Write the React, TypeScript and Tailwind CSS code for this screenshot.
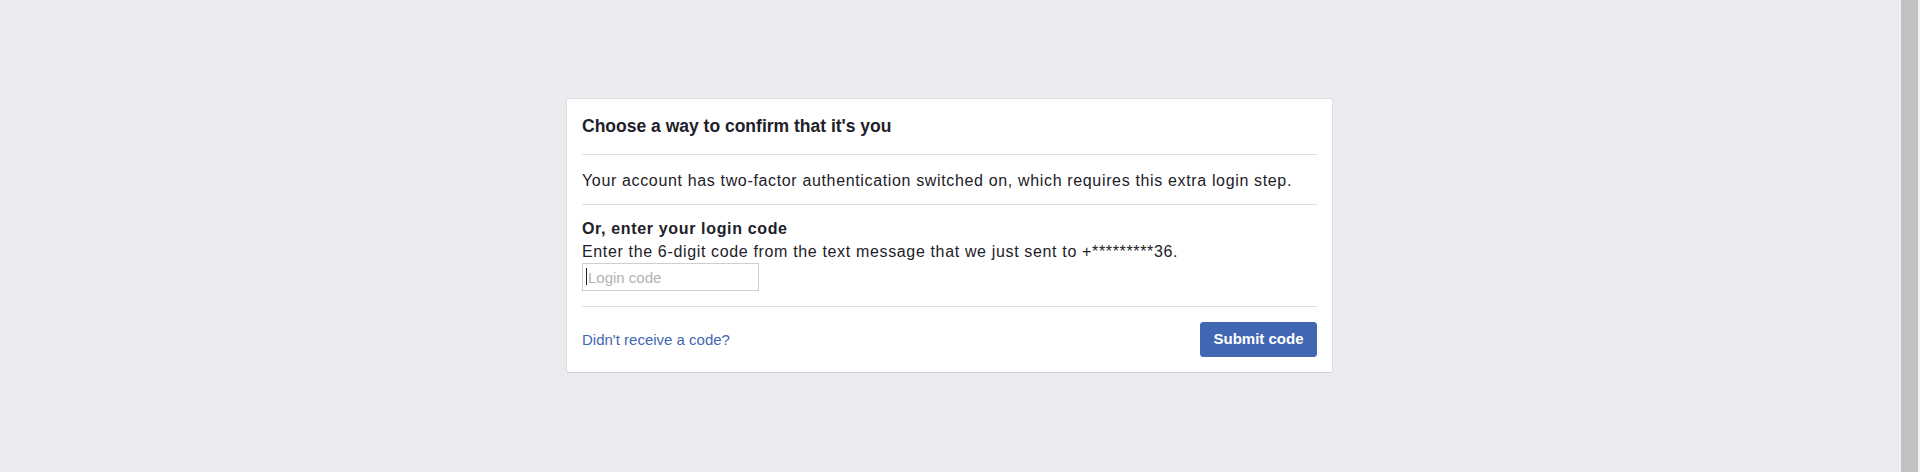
import React from "react";

export default function App() {
  return (
    <div className="flex h-[472px] w-full bg-[#e9ebee] font-['Liberation_Sans',Arial,sans-serif] text-[#1d2129]">
      <div className="flex flex-1 justify-center">
        <div className="mt-[98px] h-[275px] w-[767px] rounded-[3px] border border-[#dddfe2] border-b-[#ccd0d5] bg-white px-[15px]">
          <div className="border-b border-[#dadde1] pt-[16px] pb-[17px]">
            <h2 className="text-[17.5px] font-bold leading-[22px]">Choose a way to confirm that it's you</h2>
          </div>
          <div className="border-b border-[#dadde1] pt-[16px] pb-[13px]">
            <p className="text-[16px] leading-[20px] tracking-[0.65px]">
              Your account has two-factor authentication switched on, which requires this extra login step.
            </p>
          </div>
          <div className="border-b border-[#dadde1] pt-[13px] pb-[15px]">
            <div className="text-[16px] font-bold leading-[22px] tracking-[0.65px]">Or, enter your login code</div>
            <div className="text-[16px] leading-[23px] tracking-[0.65px]">
              Enter the 6-digit code from the text message that we just sent to +*********36.
            </div>
            <div className="relative h-[28px] w-[177px]">
              <input
                type="text"
                placeholder="Login code"
                className="h-full w-full border border-[#ccd0d5] bg-white pl-[5px] text-[15px] text-[#1d2129] outline-none placeholder:text-[#b0b3b8]"
              />
              <span className="pointer-events-none absolute left-[4px] top-[5px] h-[17px] w-px bg-[#1d2129]" />
            </div>
          </div>
          <div className="flex items-center justify-between pt-[15px]">
            <a href="#" className="text-[15px] leading-[19px] text-[#4267b2]">
              Didn't receive a code?
            </a>
            <button className="h-[35px] w-[117px] rounded-[3px] border border-[#4267b2] bg-[#4267b2] text-[15px] font-bold text-white">
              Submit code
            </button>
          </div>
        </div>
      </div>
      <div className="flex w-[21px] justify-center bg-[#f1f1f1] px-[2px]">
        <div className="h-full w-full bg-[#c1c1c1]" />
      </div>
    </div>
  );
}
